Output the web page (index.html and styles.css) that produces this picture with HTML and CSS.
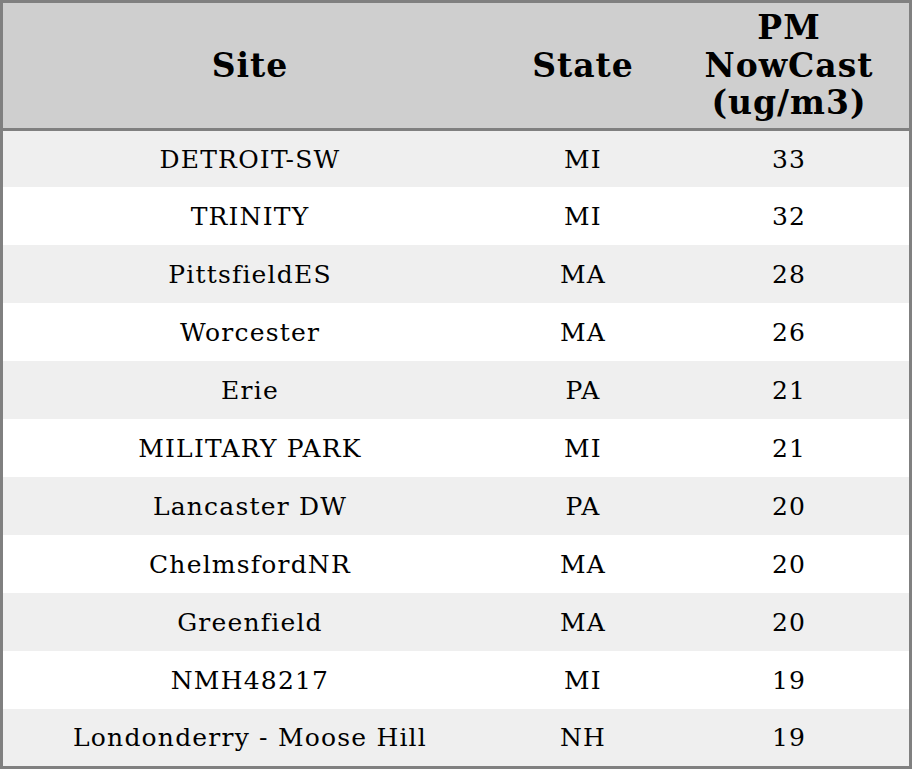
FILE: index.html
```html
<!DOCTYPE html>
<html>
<head>
<meta charset="utf-8">
<link rel="stylesheet" href="styles.css">
</head>
<body>
<table class="aq-table">
  <thead>
    <tr><th class="c-site">Site</th><th class="c-state">State</th><th class="c-pm">PM<br>NowCast<br>(ug/m3)</th></tr>
  </thead>
  <tbody>
    <tr><td>DETROIT-SW</td><td>MI</td><td>33</td></tr>
    <tr><td>TRINITY</td><td>MI</td><td>32</td></tr>
    <tr><td>PittsfieldES</td><td>MA</td><td>28</td></tr>
    <tr><td>Worcester</td><td>MA</td><td>26</td></tr>
    <tr><td>Erie</td><td>PA</td><td>21</td></tr>
    <tr><td>MILITARY PARK</td><td>MI</td><td>21</td></tr>
    <tr><td>Lancaster DW</td><td>PA</td><td>20</td></tr>
    <tr><td>ChelmsfordNR</td><td>MA</td><td>20</td></tr>
    <tr><td>Greenfield</td><td>MA</td><td>20</td></tr>
    <tr><td>NMH48217</td><td>MI</td><td>19</td></tr>
    <tr><td>Londonderry - Moose Hill</td><td>NH</td><td>19</td></tr>
  </tbody>
</table>
</body>
</html>
```
FILE: styles.css
```css
html, body { margin: 0; padding: 0; background: #fff; }
.aq-table {
  width: 912px;
  border-collapse: collapse;
  border: 3px solid #808080;
  font-family: "DejaVu Serif", serif;
  color: #000;
}
.aq-table th {
  background: #cfcfcf;
  font-weight: bold;
  font-size: 33px;
  letter-spacing: 1px;
  line-height: 37.5px;
  height: 125px;
  padding: 0;
  text-align: center;
  border-bottom: 3px solid #808080;
}
.c-site { width: 494px; }
.c-state { width: 172px; }
.c-pm { width: 240px; }
.aq-table td {
  font-size: 25px;
  letter-spacing: 1.2px;
  height: 58px;
  padding: 0;
  text-align: center;
}
.aq-table tbody tr:first-child td { height: 56px; }
.aq-table tbody tr:last-child td { height: 57px; }
.aq-table tbody tr:nth-child(odd) { background: #efefef; }
.aq-table tbody tr:nth-child(even) { background: #fff; }
```
